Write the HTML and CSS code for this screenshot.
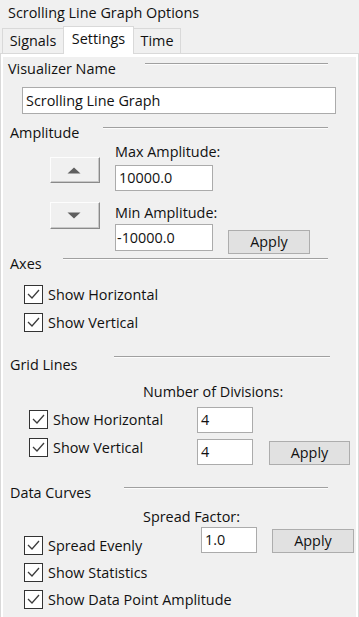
FILE: index.html
```html
<!DOCTYPE html>
<html>
<head>
<meta charset="utf-8">
<link rel="stylesheet" href="styles.css">
</head>
<body>
<div class="title">Scrolling Line Graph Options</div>
<div class="tabs">
  <div class="tab tab-signals">Signals</div>
  <div class="tab tab-settings active">Settings</div>
  <div class="tab tab-time">Time</div>
</div>
<div class="panel">
  <div class="inner">
    <section class="sec sec-vn">
      <div class="hdr hdr-vn"><span class="hlabel">Visualizer Name</span><span class="hline"></span></div>
      <div class="field field-vn">Scrolling Line Graph</div>
    </section>

    <section class="sec sec-amp">
      <div class="hdr hdr-amp"><span class="hlabel">Amplitude</span><span class="hline"></span></div>
      <div class="amp-body">
        <div class="spin-col">
          <div class="spin spin-up"><svg width="14" height="7" viewBox="0 0 14 7"><polygon points="0.5,6.5 13.5,6.5 7,0.5" fill="#5f5f5f"/></svg></div>
          <div class="spin spin-down"><svg width="14" height="7" viewBox="0 0 14 7"><polygon points="0.5,0.5 13.5,0.5 7,6.5" fill="#5f5f5f"/></svg></div>
        </div>
        <div class="amp-col">
          <div class="lbl lbl-max">Max Amplitude:</div>
          <div class="field field-amp field-max">10000.0</div>
          <div class="lbl lbl-min">Min Amplitude:</div>
          <div class="amp-row">
            <div class="field field-amp field-min">-10000.0</div>
            <div class="btn btn-amp">Apply</div>
          </div>
        </div>
      </div>
    </section>

    <section class="sec sec-axes">
      <div class="hdr hdr-axes"><span class="hlabel">Axes</span><span class="hline"></span></div>
      <div class="cb cb-axes-h"><span class="box"><svg width="17" height="17" viewBox="0 0 17 17"><path d="M3 8 L7 12 L14 4" fill="none" stroke="#3c3c3c" stroke-width="1.3"/></svg></span>Show Horizontal</div>
      <div class="cb cb-axes-v"><span class="box"><svg width="17" height="17" viewBox="0 0 17 17"><path d="M3 8 L7 12 L14 4" fill="none" stroke="#3c3c3c" stroke-width="1.3"/></svg></span>Show Vertical</div>
    </section>

    <section class="sec sec-grid">
      <div class="hdr hdr-grid"><span class="hlabel">Grid Lines</span><span class="hline"></span></div>
      <div class="lbl lbl-div">Number of Divisions:</div>
      <div class="grid-row">
        <div class="grid-cbs">
          <div class="cb cb-grid-h"><span class="box"><svg width="17" height="17" viewBox="0 0 17 17"><path d="M3 8 L7 12 L14 4" fill="none" stroke="#3c3c3c" stroke-width="1.3"/></svg></span>Show Horizontal</div>
          <div class="cb cb-grid-v"><span class="box"><svg width="17" height="17" viewBox="0 0 17 17"><path d="M3 8 L7 12 L14 4" fill="none" stroke="#3c3c3c" stroke-width="1.3"/></svg></span>Show Vertical</div>
        </div>
        <div class="grid-fields">
          <div class="field field-small field-gh">4</div>
          <div class="field field-small field-gv">4</div>
        </div>
        <div class="btn btn-grid">Apply</div>
      </div>
    </section>

    <section class="sec sec-data">
      <div class="hdr hdr-data"><span class="hlabel">Data Curves</span><span class="hline"></span></div>
      <div class="lbl lbl-spread">Spread Factor:</div>
      <div class="data-row">
        <div class="data-cbs">
          <div class="cb cb-d1"><span class="box"><svg width="17" height="17" viewBox="0 0 17 17"><path d="M3 8 L7 12 L14 4" fill="none" stroke="#3c3c3c" stroke-width="1.3"/></svg></span>Spread Evenly</div>
          <div class="cb cb-d2"><span class="box"><svg width="17" height="17" viewBox="0 0 17 17"><path d="M3 8 L7 12 L14 4" fill="none" stroke="#3c3c3c" stroke-width="1.3"/></svg></span>Show Statistics</div>
          <div class="cb cb-d3"><span class="box"><svg width="17" height="17" viewBox="0 0 17 17"><path d="M3 8 L7 12 L14 4" fill="none" stroke="#3c3c3c" stroke-width="1.3"/></svg></span>Show Data Point Amplitude</div>
        </div>
        <div class="field field-small field-spread">1.0</div>
        <div class="btn btn-data">Apply</div>
      </div>
    </section>
  </div>
</div>
</body>
</html>
```

FILE: styles.css
```css
html, body {
  margin: 0;
  padding: 0;
}
body {
  width: 359px;
  height: 617px;
  overflow: hidden;
  background: #f0f0f0;
  font-family: "Open Sans", "Noto Sans", sans-serif;
  font-size: 14.4px;
  line-height: 18px;
  color: #111;
}
.title {
  box-sizing: border-box;
  height: 26px;
  padding: 4px 0 0 8px;
}
.tabs {
  height: 27px;
  display: flex;
  align-items: flex-end;
  padding-left: 2px;
  position: relative;
  z-index: 2;
}
.tab {
  box-sizing: border-box;
  height: 25px;
  border: 1px solid #d9d9d9;
  border-bottom: none;
  background: #f0f0f0;
  text-align: center;
  padding-top: 3px;
}
.tab-signals { width: 62px; }
.tab-settings { width: 71px; margin-left: -1px; }
.tab-time { width: 48px; margin-left: -1px; }
.tab.active {
  position: relative;
  z-index: 3;
  height: 28px;
  margin-bottom: -1px;
  background: #fff;
  padding-top: 3px;
}
.panel {
  box-sizing: border-box;
  width: 359px;
  height: 564px;
  border-top: 1px solid #d9d9d9;
  border-left: 1px solid #d9d9d9;
  border-right: 1px solid #d9d9d9;
  background: #fff;
  padding: 3px 2px 0 2px;
}
.inner {
  height: 100%;
  background: #f0f0f0;
  overflow: hidden;
}

/* section headers */
.hdr {
  display: grid;
  width: 325px;
  height: 18px;
}
.hlabel {
  margin-left: 7px;
  white-space: nowrap;
  grid-column: 1;
  grid-row: 1;
}
.hline {
  grid-column: 2;
  grid-row: 1;
  margin-top: 3px;
  height: 0;
  border-top: 1px solid #a0a0a0;
  border-bottom: 1px solid #fcfcfc;
}
.hdr-vn { grid-template-columns: 142px 1fr; }
.hdr-vn .hlabel { margin-left: 5px; }
.hdr-amp { grid-template-columns: 100px 1fr; }
.hdr-axes { grid-template-columns: 60px 1fr; }
.hdr-grid { grid-template-columns: 111px 1fr; width: 327px; }
.hdr-grid .hline { margin-top: 0; }
.hdr-data { grid-template-columns: 121px 1fr; }

/* text boxes */
.field {
  box-sizing: border-box;
  background: #fff;
  border: 1px solid #ababab;
  padding-left: 3px;
  white-space: nowrap;
}
.field-vn {
  margin: 9px 0 0 19px;
  width: 314px;
  height: 27px;
  line-height: 25px;
}
.field-amp {
  width: 98px;
  height: 26px;
  line-height: 24px;
}
.field-max { margin-top: 4px; }
.field-min { margin-top: 2px; height: 27px; line-height: 25px; padding-left: 1px; }
.field-small {
  width: 56px;
  height: 26px;
  line-height: 24px;
}

/* buttons */
.btn {
  box-sizing: border-box;
  background: #e1e1e1;
  border: 1px solid #adadad;
  text-align: center;
  line-height: 22px;
  height: 24px;
}
.spin {
  box-sizing: border-box;
  width: 50px;
  height: 26px;
  display: flex;
  align-items: center;
  justify-content: center;
  background: #f0f0f0;
  border: 1px solid;
  border-color: #fdfdfd #8a8a8a #8a8a8a #fdfdfd;
  box-shadow: inset -1px -1px 0 #c8c8c8;
}
.spin svg { display: block; margin-left: -2px; }

/* amplitude */
.sec-vn { padding-top: 3px; }
.sec-amp { margin-top: 10px; }
.amp-body { display: flex; }
.spin-col { margin-left: 47px; }
.spin-up { margin-top: 15px; }
.spin-down { margin-top: 19px; height: 27px; }
.amp-col { margin-left: 15px; }
.lbl { white-space: nowrap; }
.lbl-max { margin-top: 1px; }
.lbl-min { margin-top: 13px; }
.amp-row { display: flex; align-items: flex-start; }
.btn-amp { width: 82px; margin: 8px 0 0 15px; }

/* checkboxes */
.cb {
  display: flex;
  align-items: center;
  height: 19px;
  white-space: nowrap;
}
.box {
  box-sizing: border-box;
  width: 19px;
  height: 19px;
  border: 1px solid #333;
  background: #fff;
  margin-right: 5px;
  flex: none;
}
.box svg { display: block; }

/* axes */
.sec-axes { margin-top: 1px; }
.sec-axes .cb { margin-left: 21px; }
.cb-axes-h { margin-top: 12px; }
.cb-axes-v { margin-top: 9px; }

/* grid lines */
.sec-grid { margin-top: 24px; }
.lbl-div { margin: 9px 0 0 140px; }
.grid-row { display: flex; align-items: flex-start; }
.grid-cbs { width: 168px; margin-left: 26px; }
.cb-grid-h { margin-top: 9px; }
.cb-grid-v { margin-top: 9px; }
.field-gh { margin-top: 6px; }
.field-gv { margin-top: 6px; }
.btn-grid { width: 81px; margin: 40px 0 0 16px; }

/* data curves */
.sec-data { margin-top: 19px; }
.lbl-spread { margin: 6px 0 0 140px; }
.data-row { display: flex; align-items: flex-start; }
.data-cbs { width: 177px; margin-left: 21px; }
.cb-d1 { margin-top: 10px; }
.cb-d2 { margin-top: 8px; }
.cb-d3 { margin-top: 8px; }
.field-spread { margin-top: 1px; }
.btn-data { width: 82px; margin: 3px 0 0 15px; }
```
